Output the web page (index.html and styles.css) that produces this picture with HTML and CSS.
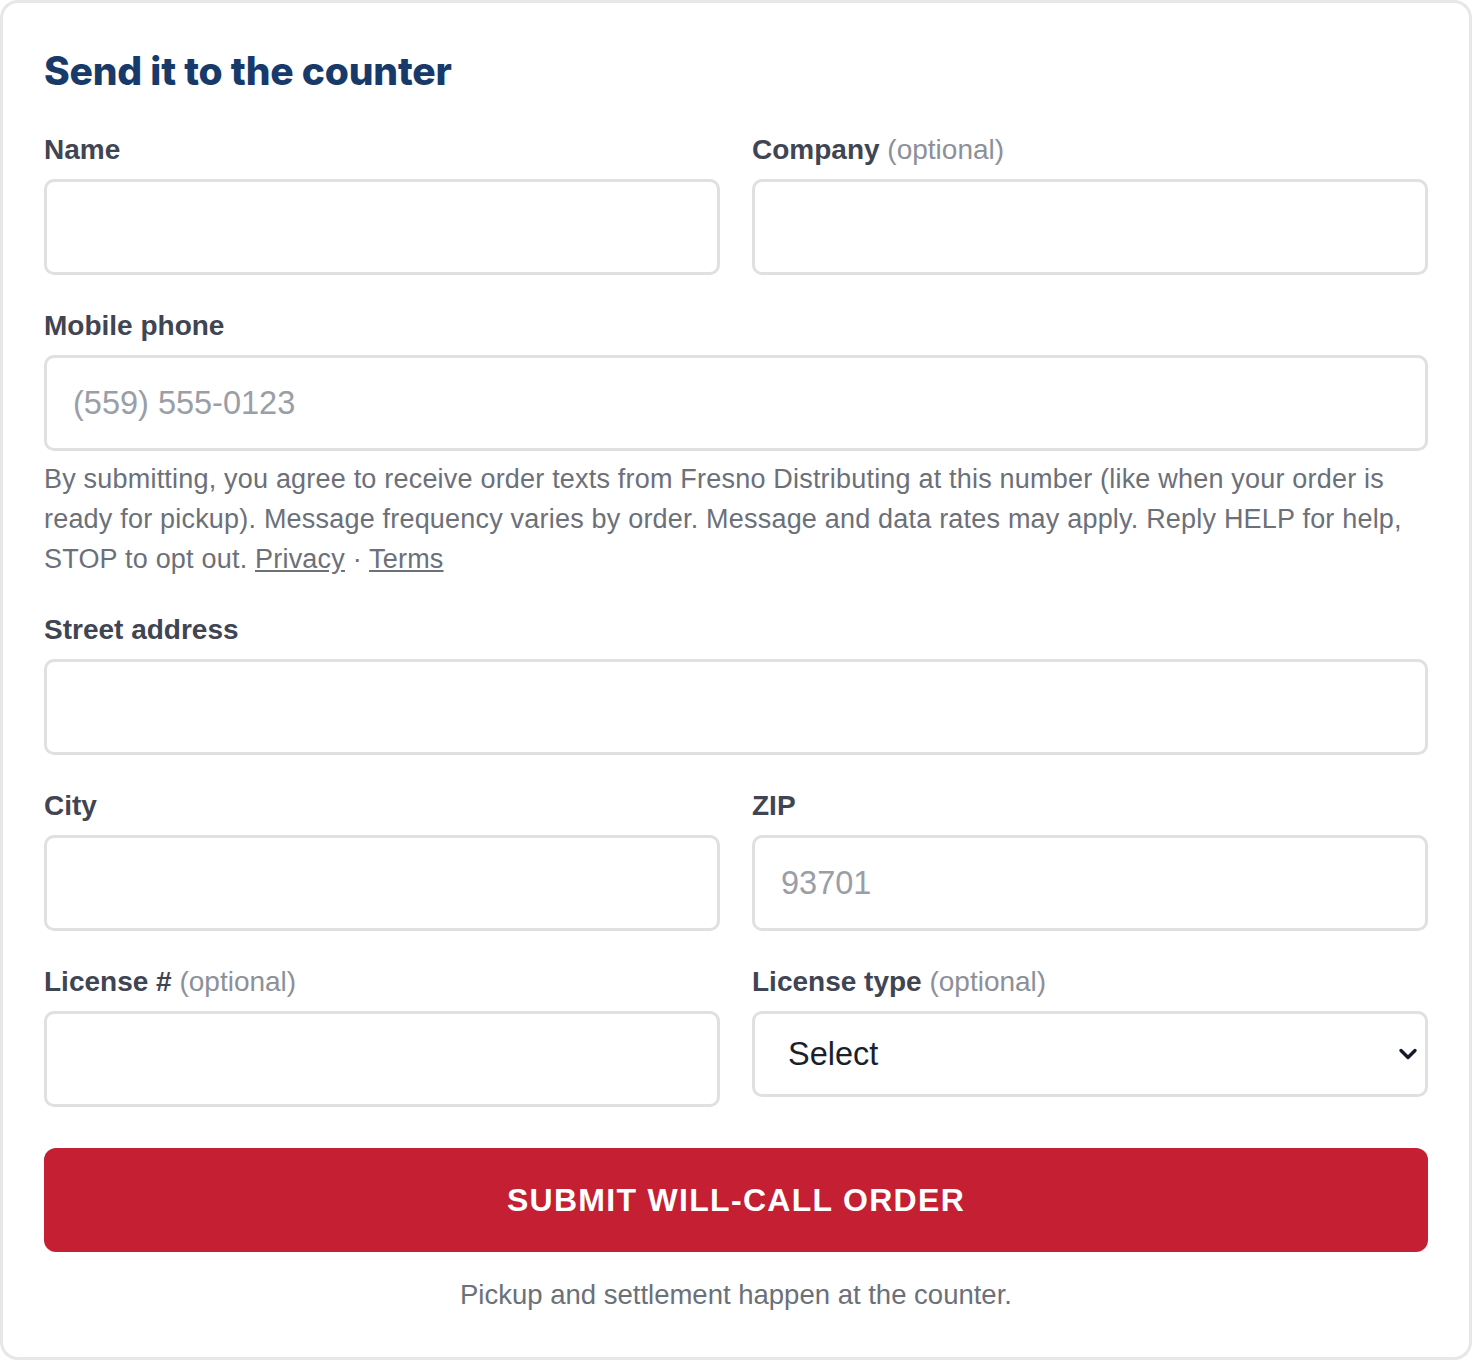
FILE: index.html
```html
<!DOCTYPE html>
<html lang="en">
<head>
    <meta charset="UTF-8">
    <meta name="viewport" content="width=device-width, initial-scale=1.0">
    <title>Send it to the counter</title>
    <link rel="stylesheet" href="styles.css">
</head>
<body>
    <form class="order-card">
        <h2 class="card-title">Send it to the counter</h2>

        <div class="form-row two-col">
            <div class="field">
                <label for="name">Name</label>
                <input type="text" id="name" name="name">
            </div>
            <div class="field">
                <label for="company">Company <span class="optional">(optional)</span></label>
                <input type="text" id="company" name="company">
            </div>
        </div>

        <div class="form-row">
            <div class="field">
                <label for="phone">Mobile phone</label>
                <input type="tel" id="phone" name="phone" placeholder="(559) 555-0123">
                <p class="sms-note">By submitting, you agree to receive order texts from Fresno Distributing at this number (like when your order is ready for pickup). Message frequency varies by order. Message and data rates may apply. Reply HELP for help, STOP to opt out. <a href="#">Privacy</a> · <a href="#">Terms</a></p>
            </div>
        </div>

        <div class="form-row">
            <div class="field">
                <label for="street">Street address</label>
                <input type="text" id="street" name="street">
            </div>
        </div>

        <div class="form-row two-col">
            <div class="field">
                <label for="city">City</label>
                <input type="text" id="city" name="city">
            </div>
            <div class="field">
                <label for="zip">ZIP</label>
                <input type="text" id="zip" name="zip" placeholder="93701">
            </div>
        </div>

        <div class="form-row two-col">
            <div class="field">
                <label for="license">License # <span class="optional">(optional)</span></label>
                <input type="text" id="license" name="license">
            </div>
            <div class="field">
                <label for="licenseType">License type <span class="optional">(optional)</span></label>
                <div class="select-wrap">
                    <select id="licenseType" name="licenseType">
                        <option>Select</option>
                    </select>
                    <svg class="select-arrow" viewBox="0 0 20 14" width="20" height="14">
                        <path d="M3 3.5l7 7 7-7" fill="none" stroke="#151b2b" stroke-width="3.4" stroke-linecap="round" stroke-linejoin="round"/>
                    </svg>
                </div>
            </div>
        </div>

        <button type="submit" class="submit-button">Submit will-call order</button>
        <p class="footnote">Pickup and settlement happen at the counter.</p>
    </form>
</body>
</html>
```

FILE: styles.css
```css
body {
    margin: 0;
    background-color: #ffffff;
    font-family: "Liberation Sans", Arial, sans-serif;
}
.order-card {
    box-sizing: border-box;
    height: 1360px;
    padding: 30px 41px 0 41px;
    background-color: #ffffff;
    border: 3px solid #e6e7e9;
    border-radius: 18px;
    display: flex;
    flex-direction: column;
}
.card-title {
    margin: 0 0 24px 0;
    font-family: Inter, sans-serif;
    font-weight: 800;
    font-size: 39px;
    line-height: 76px;
    letter-spacing: -0.2px;
    color: #173a6a;
}
.form-row {
    display: flex;
    flex-direction: column;
    margin-bottom: 34px;
}
.form-row.two-col {
    display: grid;
    grid-template-columns: 1fr 1fr;
    column-gap: 32px;
}
.field {
    display: flex;
    flex-direction: column;
}
label {
    font-size: 28px;
    line-height: 34px;
    font-weight: 700;
    color: #3f4552;
    margin-bottom: 12px;
}
.optional {
    font-weight: 400;
    color: #8b9099;
}
input[type="text"], input[type="tel"] {
    box-sizing: border-box;
    height: 96px;
    padding: 0 26px;
    border: 3px solid #dfe0e2;
    border-radius: 10px;
    font-family: "Liberation Sans", Arial, sans-serif;
    font-size: 32.5px;
    color: #1f2937;
    outline: none;
}
input::placeholder {
    color: #9a9ea6;
}
.sms-note {
    margin: 8px 0 0 0;
    font-size: 27px;
    line-height: 40px;
    letter-spacing: 0.2px;
    color: #6b7079;
}
.sms-note a {
    color: #6b7079;
}
.select-wrap {
    position: relative;
}
select {
    box-sizing: border-box;
    width: 100%;
    height: 86px;
    padding: 0 33px;
    border: 3px solid #dfe0e2;
    border-radius: 10px;
    background-color: #ffffff;
    font-family: "Liberation Sans", Arial, sans-serif;
    font-size: 32.5px;
    color: #1a1f2c;
    appearance: none;
    outline: none;
}
.select-arrow {
    position: absolute;
    right: 10px;
    top: 36px;
    pointer-events: none;
}
.submit-button {
    margin-top: 7px;
    height: 104px;
    border: none;
    border-radius: 12px;
    background-color: #c41f32;
    color: #ffffff;
    font-family: "Liberation Sans", Arial, sans-serif;
    font-weight: 700;
    font-size: 32px;
    letter-spacing: 1.3px;
    text-transform: uppercase;
    cursor: pointer;
}
.footnote {
    margin: 26px 0 0 0;
    text-align: center;
    font-size: 27.5px;
    line-height: 34px;
    color: #6b7079;
}
```
